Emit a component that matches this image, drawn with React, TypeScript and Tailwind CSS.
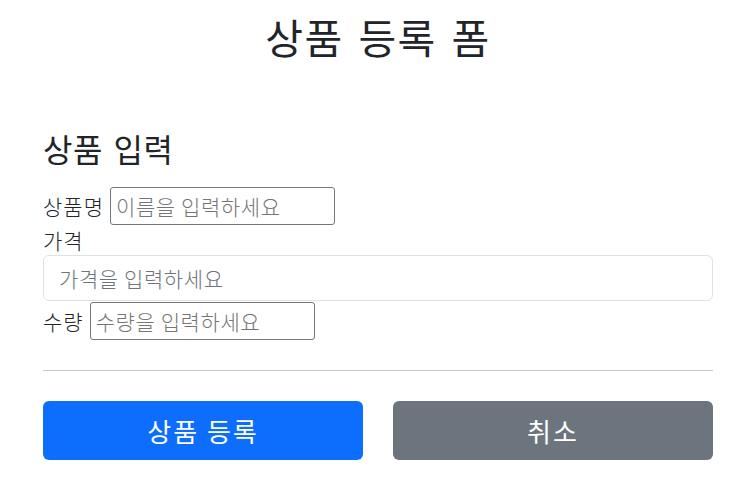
export default function App() {
  return (
    <div className="min-h-screen bg-white font-['Noto_Sans_CJK_KR',sans-serif] text-[#212529]">
      <div className="ml-[43px] w-[670px] pt-[12px] pb-[30px]">
        {/* 제목 */}
        <div className="text-center">
          <h2 className="text-[41px] leading-[48px] font-normal tracking-[1.5px] [word-spacing:4px]">상품 등록 폼</h2>
        </div>

        <h4 className="mt-[70px] text-[32px] leading-[36px] font-normal tracking-[0.5px] [word-spacing:3px]">상품 입력</h4>

        <form className="mt-[21px] text-[21px] leading-[30px] font-light" onSubmit={(e) => e.preventDefault()}>
          <div className="flex h-[38px] items-center">
            <label htmlFor="itemName" className="tracking-[1px]">상품명</label>
            <input
              id="itemName"
              type="text"
              placeholder="이름을 입력하세요"
              className="ml-[6px] h-[38px] w-[225px] rounded-[3px] border border-[#767676] px-[5px] tracking-[0.6px] placeholder:text-[#757575]"
            />
          </div>

          <label htmlFor="price" className="block tracking-[1px]">가격</label>
          <input
            id="price"
            type="text"
            placeholder="가격을 입력하세요"
            className="block h-[46px] w-full rounded-[6px] border border-[#dee2e6] px-[15px] tracking-[0.6px] placeholder:text-[#6c757d]"
          />

          <div className="mt-[1px] flex h-[38px] items-center">
            <label htmlFor="quantity" className="tracking-[1px]">수량</label>
            <input
              id="quantity"
              type="text"
              placeholder="수량을 입력하세요"
              className="ml-[6px] h-[38px] w-[225px] rounded-[3px] border border-[#767676] px-[5px] tracking-[0.6px] placeholder:text-[#757575]"
            />
          </div>

          <hr className="mt-[30px] border-t border-[#c8c9ca]" />

          <div className="mt-[30px] grid grid-cols-2 gap-[30px] font-normal">
            <button type="submit" className="h-[59px] rounded-[6px] bg-[#0d6efd] text-[26px] tracking-[2px] text-white">
              상품 등록
            </button>
            <button type="button" className="h-[59px] rounded-[6px] bg-[#6c757d] text-[26px] tracking-[2px] text-white">
              취소
            </button>
          </div>
        </form>
      </div>
    </div>
  );
}
